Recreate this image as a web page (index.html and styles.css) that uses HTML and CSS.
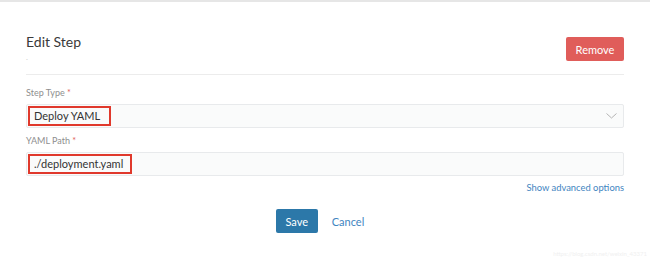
FILE: index.html
```html
<!DOCTYPE html>
<html lang="en">
<head>
    <meta charset="UTF-8">
    <meta name="viewport" content="width=device-width, initial-scale=1.0">
    <title>Edit Step</title>
    <link rel="stylesheet" href="styles.css">
</head>
<body>
    <div class="topbar"></div>
    <div class="panel">
        <div class="head">
            <div class="title">
                <h2>Edit Step</h2>
                <div class="desc">.</div>
            </div>
            <button class="btn btn-remove">Remove</button>
        </div>

        <div class="field-label">Step Type <span class="req">*</span></div>
        <div class="field field-select">
            <span class="mark">Deploy YAML</span>
            <svg class="chevron" width="11" height="6" viewBox="0 0 11 6">
                <path d="M0.5 0.5 L5.5 5 L10.5 0.5" fill="none" stroke="#b5b5b5" stroke-width="1"/>
            </svg>
        </div>

        <div class="field-label second">YAML Path <span class="req">*</span></div>
        <div class="field">
            <span class="mark mark-path">./deployment.yaml</span>
        </div>

        <div class="advanced"><a href="#">Show advanced options</a></div>

        <div class="actions">
            <button class="btn btn-save">Save</button>
            <a href="#" class="cancel">Cancel</a>
        </div>
    </div>
    <div class="watermark">https://blog.csdn.net/weixin_43371</div>
</body>
</html>
```

FILE: styles.css
```css
body {
    margin: 0;
    font-family: Lato, "Open Sans", sans-serif;
    color: #333;
    background: #fff;
}
.topbar {
    height: 2px;
    background: #e6e6e6;
}
.panel {
    padding: 0 26px;
}
.head {
    display: flex;
    justify-content: space-between;
    align-items: flex-start;
    padding-top: 30px;
    height: 42px;
    border-bottom: 1px solid #ececec;
}
.title h2 {
    margin: 0;
    font-size: 14px;
    line-height: 20px;
    font-weight: 400;
    color: #3a3a3a;
}
.desc {
    font-size: 8px;
    line-height: 8px;
    color: #ccc;
    margin-top: 1px;
}
.btn {
    border: none;
    border-radius: 2px;
    color: #fff;
    font-family: inherit;
    font-size: 11px;
    cursor: pointer;
}
.btn-remove {
    margin-top: 5px;
    height: 24px;
    width: 58px;
    background: #e05d5a;
}
.field-label {
    margin-top: 12px;
    font-size: 9px;
    line-height: 12px;
    color: #8e8e8e;
}
.field-label.second {
    margin-top: 7px;
}
.req {
    color: #e05d5a;
}
.field {
    margin-top: 5px;
    height: 24px;
    box-sizing: border-box;
    border: 1px solid #e8eaec;
    border-radius: 2px;
    background: #fafbfb;
    display: flex;
    align-items: center;
    justify-content: space-between;
    padding: 0 6px 0 1px;
}
.mark {
    height: 20px;
    box-sizing: border-box;
    border: 2px solid #e0392c;
    padding: 0 9px 0 4px;
    font-size: 11px;
    line-height: 16px;
    color: #333;
}
.mark-path {
    padding-right: 7px;
}
.advanced {
    margin-top: 6px;
    text-align: right;
    font-size: 9.4px;
    line-height: 12px;
}
.advanced a,
.cancel {
    color: #3f85bf;
    text-decoration: none;
}
.actions {
    margin-top: 15px;
    display: flex;
    justify-content: center;
    align-items: center;
    gap: 14px;
}
.btn-save {
    height: 24px;
    width: 42px;
    background: #2c78a9;
}
.cancel {
    font-size: 11px;
    padding-right: 10px;
}
.watermark {
    position: absolute;
    right: 3px;
    bottom: 2px;
    font-size: 6px;
    color: #f0f0f0;
}
```
